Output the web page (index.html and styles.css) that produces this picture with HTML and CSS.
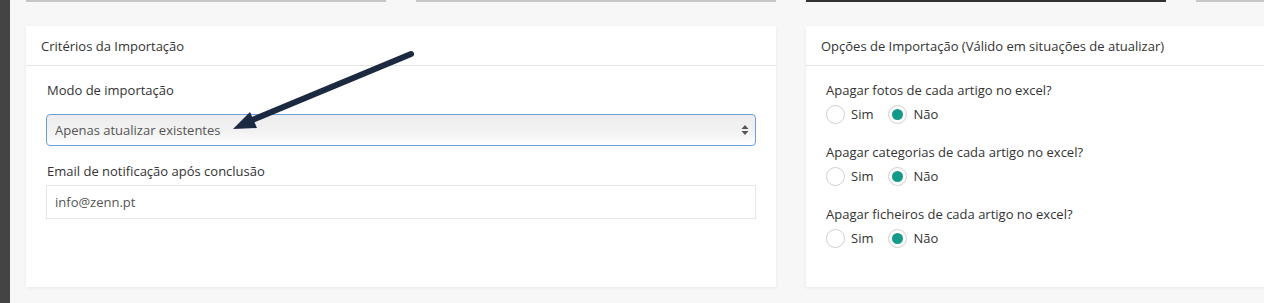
FILE: index.html
```html
<!DOCTYPE html>
<html>
   <head>
      <meta charset="UTF-8">
      <meta name="viewport" content="width=device-width, initial-scale=1.0"/>
      <title>Importação de artigos</title>
      <link rel="stylesheet" href="styles.css">
   </head>
   <body>
      <div class="page">
         <aside class="sidebar"></aside>

         <main class="main">
            <div class="tabs">
               <span class="tab"></span>
               <span class="tab"></span>
               <span class="tab active"></span>
               <span class="tab"></span>
            </div>

            <div class="cards">
               <section class="card">
                  <h4 class="card-title">Critérios da Importação</h4>
                  <div class="card-body">
                     <label class="field-label first" for="import-mode">Modo de importação</label>
                     <div class="select-wrap">
                        <select id="import-mode" class="select">
                           <option>Apenas atualizar existentes</option>
                           <option>Criar e atualizar</option>
                        </select>
                        <svg class="select-arrows" width="8" height="12" viewBox="0 0 8 12">
                           <path d="M4 1 L7.5 5 H0.5 Z" fill="#555"/>
                           <path d="M4 11 L7.5 7 H0.5 Z" fill="#555"/>
                        </svg>
                     </div>

                     <label class="field-label" for="notify-email">Email de notificação após conclusão</label>
                     <input id="notify-email" class="input" type="text" value="info@zenn.pt">
                  </div>
               </section>

               <section class="card">
                  <h4 class="card-title">Opções de Importação (Válido em situações de atualizar)</h4>
                  <div class="card-body">
                     <div class="opt-group">
                        <div class="opt-label">Apagar fotos de cada artigo no excel?</div>
                        <div class="radios">
                           <span class="radio"></span><span class="radio-text">Sim</span>
                           <span class="radio checked"></span><span class="radio-text">Não</span>
                        </div>
                     </div>
                     <div class="opt-group">
                        <div class="opt-label">Apagar categorias de cada artigo no excel?</div>
                        <div class="radios">
                           <span class="radio"></span><span class="radio-text">Sim</span>
                           <span class="radio checked"></span><span class="radio-text">Não</span>
                        </div>
                     </div>
                     <div class="opt-group">
                        <div class="opt-label">Apagar ficheiros de cada artigo no excel?</div>
                        <div class="radios">
                           <span class="radio"></span><span class="radio-text">Sim</span>
                           <span class="radio checked"></span><span class="radio-text">Não</span>
                        </div>
                     </div>
                  </div>
               </section>
            </div>
         </main>
      </div>

      <!-- annotation arrow pointing at the select -->
      <svg class="annotation" width="1264" height="303" viewBox="0 0 1264 303">
         <line x1="411" y1="54" x2="250" y2="121" stroke="#1b2a40" stroke-width="6" stroke-linecap="round"/>
         <polygon points="233,129 250,112 257,128" fill="#1b2a40"/>
      </svg>
   </body>
</html>
```

FILE: styles.css
```css
*
{
   box-sizing: border-box;
}

html, body
{
   margin: 0;
   height: 303px;
   overflow: hidden;
}

body
{
   position: relative;
   width: 1264px;
   background: #f7f7f7;
   font-family: "Open Sans", "Liberation Sans", sans-serif;
   font-size: 13px;
   color: #333333;
}

.page
{
   display: flex;
   height: 303px;
}

.sidebar
{
   flex: 0 0 10px;
   background: #444444;
}

.main
{
   flex: 1;
   padding-left: 16px;
   overflow: hidden;
}

.tabs
{
   display: grid;
   grid-template-columns: repeat(4, 360px);
   column-gap: 30px;
}

.tab
{
   height: 2px;
   background: #c6c6c6;
}

.tab.active
{
   background: #333333;
}

.cards
{
   display: grid;
   grid-template-columns: 750px 750px;
   column-gap: 30px;
   margin-top: 24px;
}

.card
{
   height: 261px;
   background: #ffffff;
   box-shadow: 0 1px 4px rgba(0, 0, 0, 0.06);
}

.card-title
{
   margin: 0;
   height: 40px;
   padding: 0 15px;
   display: flex;
   align-items: center;
   border-bottom: 1px solid #e3e3e3;
   font-size: 13px;
   font-weight: normal;
   color: #333333;
}

.card-body
{
   padding: 15px 20px;
}

.field-label
{
   display: block;
   line-height: 18px;
   padding-left: 1px;
   margin: 16px 0 5px;
}

.field-label.first
{
   margin: 0 0 15px;
}

.select-wrap
{
   position: relative;
}

.select
{
   -webkit-appearance: none;
   appearance: none;
   display: block;
   width: 100%;
   height: 32px;
   padding: 0 8px;
   border: 1px solid #6a9fdc;
   border-radius: 4px;
   background: linear-gradient(#ededed, #f2f2f2 55%, #ffffff);
   font-family: inherit;
   font-size: 13px;
   color: #555555;
   outline: none;
}

.select-arrows
{
   position: absolute;
   right: 7px;
   top: 10px;
}

.input
{
   display: block;
   width: 100%;
   height: 34px;
   padding: 0 8px;
   border: 1px solid #e6e6e6;
   font-family: inherit;
   font-size: 13px;
   color: #555555;
   outline: none;
}

.opt-group
{
   margin-bottom: 20px;
}

.opt-label
{
   line-height: 18px;
   margin-bottom: 6px;
}

.radios
{
   display: flex;
   align-items: center;
   height: 18px;
}

.radio
{
   display: inline-flex;
   align-items: center;
   justify-content: center;
   width: 19px;
   height: 19px;
   border: 1px solid #d0d0d0;
   border-radius: 50%;
   background: #ffffff;
}

.radio.checked::after
{
   content: "";
   width: 11px;
   height: 11px;
   border-radius: 50%;
   background: #139a88;
}

.radio-text
{
   margin: 0 15px 0 6px;
}

.annotation
{
   position: absolute;
   left: 0;
   top: 0;
   pointer-events: none;
}
```
